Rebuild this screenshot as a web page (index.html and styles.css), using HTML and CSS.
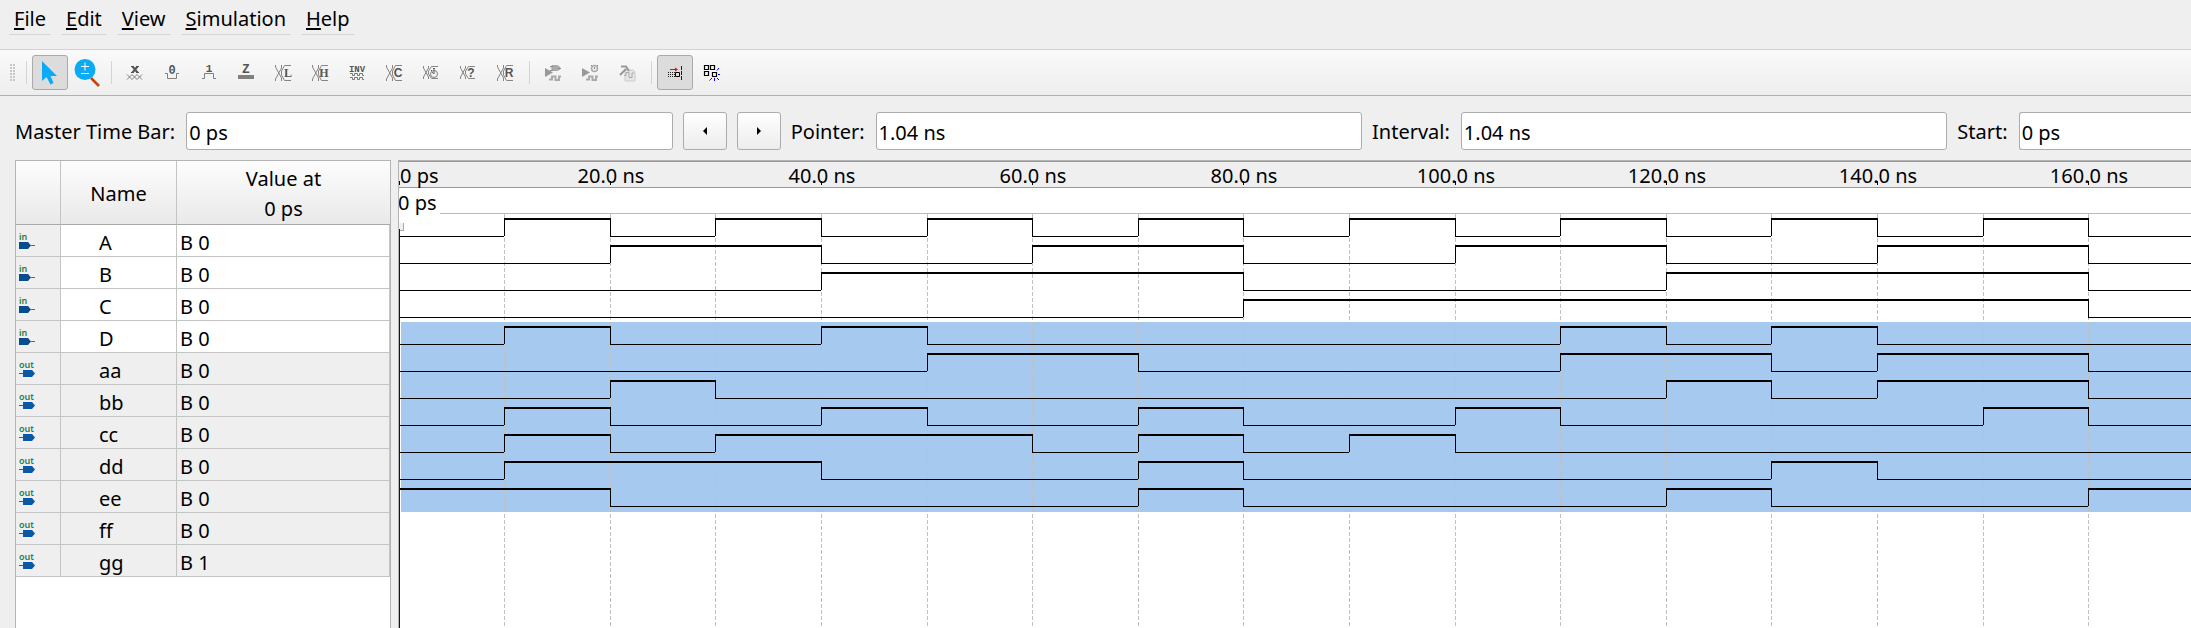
FILE: index.html
```html
<!DOCTYPE html>
<html lang="en">
<head>
<meta charset="utf-8">
<title>Simulation Waveform Editor</title>
<link rel="stylesheet" href="styles.css">
</head>
<body>
<nav class="menubar">
  <button class="menu"><u>F</u>ile</button>
  <button class="menu"><u>E</u>dit</button>
  <button class="menu"><u>V</u>iew</button>
  <button class="menu"><u>S</u>imulation</button>
  <button class="menu"><u>H</u>elp</button>
</nav>

<div class="toolbar" role="toolbar" aria-label="Waveform tools">
  <span class="handle"></span>
  <span class="sep"></span>
  <button class="tool active" aria-label="Selection tool"><svg width="26" height="26" viewBox="0 0 26 26"><path d="M5 1V21L9.500 17L13.500 24.500L16.500 23L13.500 16H20Z" fill="#0aaaf5"/></svg></button>
  <button class="tool" aria-label="Zoom tool"><svg width="28" height="28" viewBox="0 0 28 28"><path d="M18 19L26 27" stroke="#c8400f" stroke-width="2.500"/><circle cx="12" cy="10.500" r="10.500" fill="#0aaaf5"/><path d="M8 7.500H16M12 3.500V11.500M8 14.500H16" stroke="#fff" stroke-width="1"/></svg></button>
  <span class="sep"></span>
  <button class="tool" aria-label="Forcing unknown"><svg class="ico" viewBox="0 0 16 16"><path d="M4 1.500H7M9 1.500H12M4 7.500H7M9 7.500H12" stroke="#555"/><path d="M5.500 1.500L10.500 7.500M10.500 1.500L5.500 7.500" stroke="#555" stroke-width="2"/><path d="M0 9.500L5 14.500L10 9.500L15 14.500M0 14.500L5 9.500L10 14.500L15 9.500" stroke="#808080" fill="none"/></svg></button>
  <button class="tool" aria-label="Forcing low"><svg class="ico" viewBox="0 0 16 16"><path d="M1 8.500H3.500V13.500H12.500V8.500H15" stroke="#808080" fill="none"/><text x="8" y="9" class="mono" font-size="12">0</text></svg></button>
  <button class="tool" aria-label="Forcing high"><svg class="ico" viewBox="0 0 16 16"><path d="M1 13.500H3.500V8.500H12.500V13.500H15" stroke="#808080" fill="none"/><text x="8" y="7" class="mono" font-size="11">1</text></svg></button>
  <button class="tool" aria-label="High impedance"><svg class="ico" viewBox="0 0 16 16"><path d="M0 10H16V14H0Z" fill="#808080"/><text x="8" y="8" class="mono" font-size="13">Z</text></svg></button>
  <button class="tool" aria-label="Weak low"><svg class="ico" viewBox="0 0 16 16"><path class="bus" d="M.5 0V2L6.500 13V16M6.500 0V3L.5 14V16M16 .5H9.500L6.500 6V10L9.500 15.500H16"/><text x="13" y="12" class="serif">L</text></svg></button>
  <button class="tool" aria-label="Weak high"><svg class="ico" viewBox="0 0 16 16"><path class="bus" d="M.5 0V2L6.500 13V16M6.500 0V3L.5 14V16M16 .5H9.500L6.500 6V10L9.500 15.500H16"/><text x="12" y="12" class="serif">H</text></svg></button>
  <button class="tool" aria-label="Invert"><svg class="ico" viewBox="0 0 16 16"><text x="8" y="7" class="mono" font-size="9">INV</text><path d="M1 8.500H3.500V10.500H5.500V8.500H8.500V10.500H10.500V8.500H13.500V10.500H15M1 12.500H3.500V14.500H5.500V12.500H8.500V14.500H10.500V12.500H13.500V14.500H15" stroke="#777" fill="none"/></svg></button>
  <button class="tool" aria-label="Count value"><svg class="ico" viewBox="0 0 16 16"><path class="bus" d="M.5 0V2L6.500 13V16M6.500 0V3L.5 14V16M16 .5H9.500L6.500 6V10L9.500 15.500H16"/><text x="12" y="12" class="sans">C</text></svg></button>
  <button class="tool" aria-label="Overwrite clock"><svg class="ico" viewBox="0 0 16 16"><path class="bus" d="M.5 1V3L5.500 12V14M5.500 1V3L.5 12V14M15 1.500H8.500L5.500 6V9L8.500 13.500H15"/><circle cx="11" cy="9" r="3.500" fill="none" stroke="#808080"/><path d="M10 3.500H12M11 3V9L9 7M8 5L9 6" stroke="#666" fill="none"/></svg></button>
  <button class="tool" aria-label="Arbitrary value"><svg class="ico" viewBox="0 0 16 16"><path class="bus" d="M.5 1V3L5.500 12V14M5.500 1V3L.5 12V14M15 1.500H8.500L5.500 6V9L8.500 13.500H15"/><text x="11" y="12" class="sans">?</text></svg></button>
  <button class="tool" aria-label="Random value"><svg class="ico" viewBox="0 0 16 16"><path class="bus" d="M.5 0V2L6.500 13V16M6.500 0V3L.5 14V16M16 .5H9.500L6.500 6V10L9.500 15.500H16"/><text x="12" y="12" class="sans">R</text></svg></button>
  <span class="sep"></span>
  <button class="tool" aria-label="Run functional simulation"><svg class="ico" viewBox="0 0 16 16"><path d="M0 3L8 7.500L0 12Z" fill="#999"/><path d="M7 0H11C14 0 14 1 16 3.500C14 5 14 6 11 6H8L6 4Z" fill="#aaa"/><path d="M5 1.500H8M5 5.500H8M13 3.500H16" stroke="#888"/><path d="M4 14.500H7V11.500H10.500V15H14V11.500H16" stroke="#aaa" stroke-width="2" fill="none"/></svg></button>
  <button class="tool" aria-label="Run timing simulation"><svg class="ico" viewBox="0 0 16 16"><path d="M0 3L8 7.500L0 12Z" fill="#999"/><circle cx="12.500" cy="3.500" r="3" fill="#eee" stroke="#aaa" stroke-width="1.500"/><path d="M12.500 2V4M9 0L10 1M16 0L15 1" stroke="#888"/><path d="M4 14.500H7V11.500H10.500V15H14V11.500H16" stroke="#aaa" stroke-width="2" fill="none"/></svg></button>
  <button class="tool" aria-label="Generate testbench"><svg class="ico" viewBox="0 0 16 16"><path d="M6 5H14L16 7V16H6Z" fill="#e6e6e6" stroke="#ccc"/><path d="M1 10L7 4M2 1.500H7L10 6" stroke="#999" stroke-width="2" fill="none"/><path d="M5 10.500H7V7.500H10V12.500H13V8H15" stroke="#aaa" fill="none"/></svg></button>
  <span class="sep"></span>
  <button class="tool active" aria-label="Snap to transition"><svg class="ico" viewBox="0 0 16 16"><path d="M3 4.500H9" stroke="#f00"/><path d="M8 2.500L11 4.500L8 6.500Z" fill="#f00"/><path d="M1 7.500H8M1 11.500H8M1.500 7V12M3 9.500H8" stroke="#222" stroke-dasharray="1 1"/><path d="M8.500 7.500H12.500V11.500H8.500Z" stroke="#000" fill="none"/><path d="M14.500 1V15" stroke="#00f" stroke-dasharray="4 1"/></svg></button>
  <button class="tool" aria-label="Snap to grid"><svg class="ico" viewBox="0 0 16 16"><path d="M.5 .5H4.500V4.500H.5ZM6.500 .5H10.500V4.500H6.500ZM.5 6.500H4.500V10.500H.5ZM8.500 7.500H12.500V11.500H8.500Z" stroke="#000" fill="none" stroke-width="1.200"/><path d="M13 5.500L15 3M14 9.500H16M13 13L15 15M10.500 13V16M8 13L5.500 15.500" stroke="#00f"/></svg></button>
</div>

<form class="timebar">
  <label for="master">Master Time Bar:</label>
  <input id="master" class="field" value="0 ps">
  <button type="button" class="step" aria-label="Previous transition"><svg width="4" height="8" viewBox="0 0 4 8"><path d="M4 0V8L0 4Z"/></svg></button>
  <button type="button" class="step" aria-label="Next transition"><svg width="4" height="8" viewBox="0 0 4 8"><path d="M0 0V8L4 4Z"/></svg></button>
  <label for="pointer">Pointer:</label>
  <input id="pointer" class="field" value="1.04 ns">
  <label for="interval">Interval:</label>
  <input id="interval" class="field" value="1.04 ns">
  <label for="start">Start:</label>
  <input id="start" class="field last" value="0 ps">
</form>

<main class="workspace">
  <section class="signals">
    <table>
      <colgroup><col class="c-icon"><col class="c-name"><col></colgroup>
      <thead><tr><th></th><th>Name</th><th>Value at<br>0 ps</th></tr></thead>
      <tbody id="rows"></tbody>
    </table>
  </section>
  <section class="waves" aria-label="Waveforms"><svg id="plot" class="plot"></svg></section>
</main>
<script src="waves.js"></script>
</body>
</html>
```
FILE: styles.css
```css
* { box-sizing: border-box; }
body {
  margin: 0;
  height: 100vh;
  display: flex;
  flex-direction: column;
  overflow: hidden;
  background: #efefef;
  color: #000;
  font: 20px/24px "Noto Sans", "Open Sans", sans-serif;
}
button, input { font: inherit; color: inherit; margin: 0; }

.menubar { display: flex; gap: 10px; height: 49px; padding: 5px 9px 14px; }
.menu {
  padding: 0 5px 2px;
  border: 0;
  border-bottom: 1px solid #d6d6d6;
  background: none;
}
.menu u { text-underline-offset: 2px; text-decoration-thickness: 2px; }

.toolbar {
  display: flex;
  align-items: center;
  gap: 1px;
  height: 47px;
  padding: 0 10px;
  border-top: 1px solid #d2d2d2;
  border-bottom: 1px solid #b2b2b2;
  background: linear-gradient(#fafafa, #eeeeee);
}
.handle {
  width: 10px;
  height: 17px;
  padding-right: 5px;
  background: radial-gradient(circle at 1px 1px, #c8c8c8 1px, transparent 1px) 0 0 / 3px 3px content-box;
}
.sep { width: 10px; height: 23px; background: linear-gradient(#d4d4d4, #d4d4d4) 5px 0 / 1px 23px no-repeat; }
.tool {
  display: flex;
  align-items: center;
  justify-content: center;
  width: 36px;
  height: 35px;
  padding: 0;
  border: 1px solid transparent;
  border-radius: 3px;
  background: none;
}
.tool.active { border-color: #aaa; background: #dcdcdc; }
.ico { width: 16px; height: 16px; overflow: visible; }
.ico text { text-anchor: middle; font-weight: bold; fill: #555; }
.ico .mono { font-family: "Liberation Mono", monospace; }
.ico .serif { font: bold 12px "Liberation Serif", serif; }
.ico .sans { font: bold 12px "Liberation Sans", sans-serif; }
.bus { fill: none; stroke: #858585; }

.timebar { display: flex; align-items: center; gap: 10px; height: 64px; padding: 6px 0 0 15px; }
.timebar label { padding: 2px 1px 0 0; white-space: nowrap; }
.field {
  flex: 488 1 0;
  min-width: 0;
  height: 38px;
  padding: 2px 2px 0;
  border: 1px solid #acacac;
  border-radius: 3px;
  background: #fff;
}
.field.last { flex-grow: 170; border-right: 0; border-radius: 3px 0 0 3px; }
.step {
  display: flex;
  align-items: center;
  justify-content: center;
  flex: none;
  width: 44px;
  height: 38px;
  padding: 0;
  border: 1px solid #acacac;
  border-radius: 3px;
  background: linear-gradient(#fefefe, #ededed);
}

.workspace { display: flex; flex: 1; gap: 7px; padding-left: 15px; min-height: 0; }
.signals { flex: none; width: 376px; border: 1px solid #b4b4b4; border-bottom: 0; background: #fff; }
table { width: 100%; table-layout: fixed; border-collapse: separate; border-spacing: 0; }
.c-icon { width: 45px; }
.c-name { width: 116px; }
th {
  height: 64px;
  padding: 3px 0 0;
  border-right: 1px solid #c4c4c4;
  border-bottom: 1px solid #a8a8a8;
  background: linear-gradient(#fdfdfd, #e9e9e9);
  font-weight: normal;
  line-height: 30px;
}
th:last-child { border-right: 0; }
td {
  height: 32px;
  padding: 4px 0 0 3px;
  border-right: 1px solid #c4c4c4;
  border-bottom: 1px solid #c4c4c4;
}
td:first-child { padding: 0 0 0 3px; background: #efefef; }
td:nth-child(2) { padding-left: 38px; }
.out td { background: #efefef; }
.pin { display: block; width: 16px; height: 18px; overflow: visible; }
.pin text { font: 600 9px "Noto Sans", sans-serif; }
.in .pin text { fill: #2d7a2d; }
.out .pin text { fill: #1f7a5c; }

.waves { flex: 1; min-width: 0; border: 1px solid #b4b4b4; border-width: 1px 0 0 1px; background: #fff; }
.plot { display: block; width: 100%; height: 100%; shape-rendering: crispEdges; }
.plot text { font: 20px "Noto Sans", sans-serif; }
.mid { text-anchor: middle; }
```
FILE: waves.js
```js
// High intervals of each signal, in steps of 10 ns.
const signals = [
  ["in", "A", [[1, 2], [3, 4], [5, 6], [7, 8], [9, 10], [11, 12], [13, 14], [15, 16]]],
  ["in", "B", [[2, 4], [6, 8], [10, 12], [14, 16]]],
  ["in", "C", [[4, 8], [12, 16]]],
  ["in", "D", [[8, 16]]],
  ["out", "aa", [[1, 2], [4, 5], [11, 12], [13, 14]]],
  ["out", "bb", [[5, 7], [11, 13], [14, 16]]],
  ["out", "cc", [[2, 3], [12, 13], [14, 16]]],
  ["out", "dd", [[1, 2], [4, 5], [7, 8], [10, 11], [15, 16]]],
  ["out", "ee", [[1, 2], [3, 6], [7, 8], [9, 10]]],
  ["out", "ff", [[1, 4], [7, 8], [13, 14]]],
  ["out", "gg", [[0, 2], [7, 8], [12, 13], [16, 40]]]
];

const pins = {
  in: '<text x="0" y="8">in</text><path d="M0 10H9L12 13.500L9 17H0Z" fill="#084c8d"/><path d="M12 13.500H16" stroke="#e03040"/>',
  out: '<text x="0" y="8">out</text><path d="M4 10H13L16 13.500L13 17H4Z" fill="#0858a4"/><path d="M0 13.500H4" stroke="#a03050"/>'
};
document.getElementById("rows").innerHTML = signals.map(([dir, name, high]) =>
  `<tr class="${dir}"><td><svg class="pin" viewBox="0 0 16 18">${pins[dir]}</svg></td>` +
  `<td>${name}</td><td>B ${high[0][0] === 0 ? 1 : 0}</td></tr>`).join("");

const plot = document.getElementById("plot");
const STEP = 105.6, ROW = 27, TOP = 57, LOW = 18;
const x = i => Math.floor(i * STEP);
const rect = (l, t, w, h, fill) => `<rect x="${l}" y="${t}" width="${w}" height="${h}" fill="${fill}"/>`;

function draw() {
  const { width, height } = plot.getBoundingClientRect();
  const steps = Math.ceil(width / STEP);
  let out = rect(0, 0, width, 1, "#999") + rect(0, 1, width, 25, "#efefef") + rect(0, 26, width, 1, "#999");
  out += rect(0, 52, width, 1, "#bbb");
  out += rect(2, 161, width, 190, "#a6c9ef");
  for (let i = 1; i < steps; i++) {
    out += `<path d="M${x(i) + 0.5} 53V${height}" stroke="#c0c0c0" stroke-dasharray="4 2"/>`;
  }
  for (let i = 0; i < steps; i += 2) {
    out += rect(x(i), 20, 1, 4, "#000");
    out += i === 0 ? '<text x="1" y="22">0 ps</text>'
      : `<text class="mid" x="${x(i) + 1}" y="22">${(i * 10).toFixed(1)} ns</text>`;
  }
  out += rect(0, 45, 41, 10, "#fff") + '<text x="-1" y="49">0 ps</text>';
  out += rect(0, 62, 4, 7, "#efefef") + '<path d="M4.500 62V69.500H0" stroke="#aaa" fill="none"/>';

  signals.forEach(([, , high], k) => {
    const top = TOP + k * ROW, low = top + LOW;
    let at = 0;
    for (const [from, to] of high) {
      if (from > at) out += rect(x(at), low, x(from) - x(at), 1, "#000");
      if (from > 0) out += rect(x(from), top, 1, LOW, "#000");
      out += rect(x(from), top, x(to) - x(from) + 1, 2, "#000");
      out += rect(x(to), top, 1, LOW + 1, "#000");
      at = to;
    }
    if (at < steps) out += rect(x(at), low, width, 1, "#000");
  });
  out += rect(0, 68, 1, height, "#0000d0");
  plot.innerHTML = out;
}
draw();
addEventListener("resize", draw);
```
